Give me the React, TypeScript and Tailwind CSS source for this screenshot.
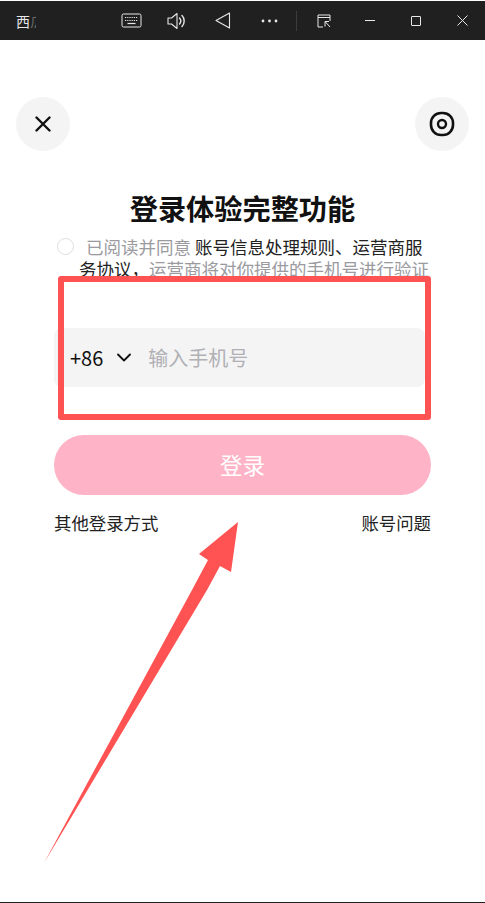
import React from 'react';

const FONT = "font-['Noto_Sans_CJK_SC','Noto_Sans',sans-serif]";

const Cell = ({ w, children }: { w: string; children: React.ReactNode }) => (
  <div className={`${w} flex items-center justify-center shrink-0`}>{children}</div>
);

const TitleBar = () => (
  <div className="h-[39px] mt-px bg-[#202020] flex items-center text-[#e8e8e8] shrink-0">
    <div className="w-[109px] pl-4 flex items-center text-[14px] leading-none shrink-0">
      <span>西</span>
      <span className="w-[6px] overflow-hidden text-[#6a6a6a] whitespace-nowrap">瓜</span>
    </div>
    <Cell w="w-[45px]">
      <svg width="21" height="15" viewBox="0 0 21 15" fill="none" stroke="currentColor">
        <rect x="1" y="1" width="19" height="13" rx="1.5" strokeWidth="1" />
        <path d="M4 4.500h13M4 7.500h13" strokeWidth="1.2" strokeDasharray="1.2 1" />
        <path d="M6.500 10.500h8" strokeWidth="1.2" />
      </svg>
    </Cell>
    <Cell w="w-[46px]">
      <svg width="20" height="18" viewBox="0 0 20 18" fill="none" stroke="currentColor" strokeWidth="1.1">
        <path d="M1 6v6h3.500L10 16.500v-15L4.500 6z" strokeLinejoin="round" />
        <path d="M12.500 6a4.500 4.500 0 0 1 0 6M15 3.500a8 8 0 0 1 0 11" strokeLinecap="round" strokeWidth="1.4" />
      </svg>
    </Cell>
    <Cell w="w-[45px]">
      <svg width="16" height="17" viewBox="0 0 16 17" fill="none" stroke="currentColor" strokeWidth="1.1">
        <path d="M14.500 1v15L1 8.500z" strokeLinejoin="round" />
      </svg>
    </Cell>
    <Cell w="w-[48px]">
      <svg width="17" height="4" viewBox="0 0 17 4" fill="currentColor">
        <circle cx="2" cy="2" r="1.4" />
        <circle cx="8.500" cy="2" r="1.4" />
        <circle cx="15" cy="2" r="1.4" />
      </svg>
    </Cell>
    <div className="w-px h-[20px] bg-[#3c3c3c] shrink-0 ml-[3px] mr-[7px]" />
    <Cell w="w-[40px]">
      <svg width="14" height="14" viewBox="0 0 14 14" fill="none" stroke="currentColor" strokeWidth="1">
        <path d="M6 13H1V1h12v6M1 3.500h12" />
        <path d="M8 7.500v5M8 7.500h4M8.500 8l4.500 5" strokeWidth="1" />
      </svg>
    </Cell>
    <div className="w-[3px] shrink-0" />
    <Cell w="w-[46px]">
      <div className="w-[10px] h-px bg-[#e8e8e8]" />
    </Cell>
    <Cell w="w-[46px]">
      <div className="w-[10px] h-[10px] border border-[#e8e8e8] rounded-[1px]" />
    </Cell>
    <Cell w="w-[46px]">
      <svg width="11" height="11" viewBox="0 0 11 11" stroke="currentColor" strokeWidth="1">
        <path d="M.5.5l10 10M10.500.5l-10 10" />
      </svg>
    </Cell>
  </div>
);

export default function App() {
  return (
    <div className={`relative h-[903px] w-[485px] bg-white overflow-hidden flex flex-col ${FONT}`}>
      <TitleBar />

      <div className="mt-[57px] px-4 flex justify-between shrink-0">
        <button className="w-[54px] h-[54px] rounded-full bg-[#f4f4f4] flex items-center justify-center">
          <svg width="16" height="16" viewBox="0 0 16 16" stroke="#111" strokeWidth="2.4" strokeLinecap="round">
            <path d="M1.500 1.500l13 13M14.500 1.500l-13 13" />
          </svg>
        </button>
        <button className="w-[54px] h-[54px] rounded-full bg-[#f4f4f4] flex items-center justify-center">
          <svg width="26" height="26" viewBox="0 0 26 26" fill="none" stroke="#111" strokeWidth="2.6">
            <rect x="2" y="2" width="22" height="22" rx="10" />
            <circle cx="13" cy="13" r="4" strokeWidth="2.4" />
          </svg>
        </button>
      </div>

      <h1 className="mt-[37px] h-[40px] text-center text-[28.2px] leading-[40px] font-bold text-[#111] shrink-0">
        登录体验完整功能
      </h1>

      <p className="mt-[8px] ml-[79px] w-[380px] h-[43px] text-[17.5px] leading-[22px] text-[#9a9a9f] indent-[-22px] whitespace-nowrap shrink-0">
        <span className="inline-block w-[17px] h-[17px] rounded-full border-[1.5px] border-[#dedede] mr-[12px] align-[-1px]" />
        已阅读并同意 <span className="text-[#222]">账号信息处理规则、运营商服</span>
        <br />
        <span className="text-[#222]">务协议，</span>运营商将对你提供的手机号进行验证
      </p>

      <div className="mt-[49px] ml-[54px] w-[371px] h-[59px] bg-[#f4f4f4] rounded-[8px] flex items-center pl-4 shrink-0">
        <span className="text-[20px] text-[#111] leading-none">+86</span>
        <svg width="14" height="9" viewBox="0 0 14 9" fill="none" stroke="#111" strokeWidth="1.8" strokeLinecap="round" strokeLinejoin="round" className="ml-[14px]">
          <path d="M1 1.500l6 6 6-6" />
        </svg>
        <span className="ml-[17px] text-[20px] leading-none text-[#b0b0b5]">输入手机号</span>
      </div>

      <button className="mt-[48px] ml-[54px] w-[377px] h-[60px] rounded-full bg-[#ffb3c6] text-white text-[22.5px] shrink-0">
        登录
      </button>

      <div className="mt-[16px] ml-[54px] w-[377px] flex justify-between text-[17.4px] leading-[24px] text-[#222] shrink-0">
        <span>其他登录方式</span>
        <span>账号问题</span>
      </div>

      <div className="mt-auto h-px bg-[#202020] shrink-0" />

      {/* annotation: red box */}
      <div className="absolute left-[58px] top-[276px] w-[373px] h-[144px] border-[6px] border-[#ff5252] rounded-[3px]" />

      {/* annotation: red arrow */}
      <svg className="absolute left-0 top-0 pointer-events-none" width="485" height="903" viewBox="0 0 485 903">
        <polygon points="44,863 192,590 208,560 199,554 238,522 231,572 220,566 207,590" fill="#ff5252" />
      </svg>
    </div>
  );
}
